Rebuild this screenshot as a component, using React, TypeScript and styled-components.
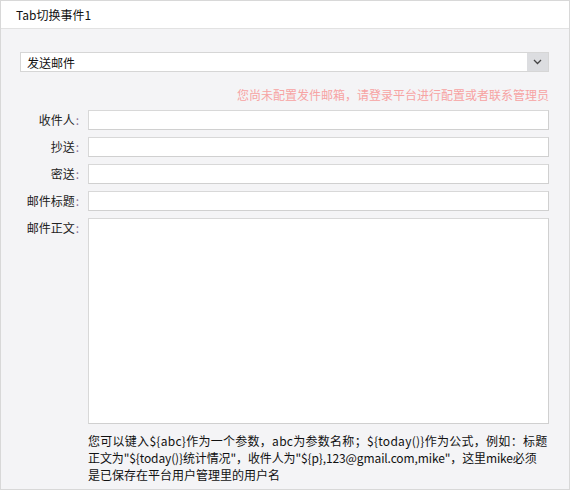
import React from "react";
import styled, { createGlobalStyle } from "styled-components";

const Global = createGlobalStyle`
  html, body { margin: 0; padding: 0; background: #ffffff; }
  body { font-family: "Noto Sans CJK SC", "Noto Sans", sans-serif; font-size: 12px; color: #222; }
  * { box-sizing: border-box; }
`;

const Frame = styled.div`
  width: 570px;
  height: 490px;
  border: 1px solid #d8d8d8;
  background: #f4f4f6;
  display: flex;
  flex-direction: column;
`;

const Header = styled.div`
  height: 28px;
  flex: none;
  background: #ffffff;
  border-bottom: 1px solid #e2e2e2;
  padding-left: 15px;
  display: flex;
  align-items: center;
  font-size: 12px;
  color: #111;
`;

const Body = styled.div`
  padding: 23px 20px 0 19px;
  display: flex;
  flex-direction: column;
`;

const Select = styled.div`
  height: 20px;
  display: flex;
  background: #ffffff;
  border: 1px solid #d6d6d6;
`;

const SelectText = styled.div`
  flex: 1;
  padding-left: 6px;
  display: flex;
  align-items: center;
  font-size: 12px;
  color: #111;
`;

const Arrow = styled.div`
  width: 21px;
  background: #dcdde0;
  display: flex;
  align-items: center;
  justify-content: center;
`;

const Warning = styled.div`
  margin-top: 15px;
  text-align: right;
  color: #f7a3a3;
  font-size: 12px;
  line-height: 16px;
`;

const Form = styled.div`
  margin-top: 7px;
  display: grid;
  grid-template-columns: 68px 1fr;
  row-gap: 7px;
`;

const Label = styled.div`
  padding-right: 9px;
  text-align: right;
  font-size: 12px;
  line-height: 20px;
  color: #222;
`;

const Colon = styled.span`
  color: #8e7596;
  margin-left: 1px;
`;

const Input = styled.div<{ $h?: number }>`
  height: ${(p) => p.$h ?? 20}px;
  background: #ffffff;
  border: 1px solid #d8d8d8;
  border-right-color: #d0d0d0;
  border-bottom-color: #d0d0d0;
`;

const Help = styled.div`
  margin: 8px 0 0 68px;
  font-size: 12px;
  line-height: 17px;
  color: #111;
`;

const Line = styled.div<{ $ls?: number }>`
  white-space: nowrap;
  letter-spacing: ${(p) => p.$ls ?? 0}px;
`;

const fields = ["收件人", "抄送", "密送", "邮件标题"];

export default function App() {
  return (
    <>
      <Global />
      <Frame>
        <Header>Tab切换事件1</Header>
        <Body>
          <Select>
            <SelectText>发送邮件</SelectText>
            <Arrow>
              <svg width="9" height="6" viewBox="0 0 9 6">
                <path d="M1 1 L4.5 4.5 L8 1" fill="none" stroke="#444" strokeWidth="1.3" />
              </svg>
            </Arrow>
          </Select>
          <Warning>您尚未配置发件邮箱，请登录平台进行配置或者联系管理员</Warning>
          <Form>
            {fields.map((f) => (
              <React.Fragment key={f}>
                <Label>
                  {f}
                  <Colon>:</Colon>
                </Label>
                <Input />
              </React.Fragment>
            ))}
            <Label>
              邮件正文<Colon>:</Colon>
            </Label>
            <Input $h={206} />
          </Form>
          <Help>
            <Line $ls={0.28}>您可以键入${"{abc}"}作为一个参数，abc为参数名称；${"{today()}"}作为公式，例如：标题</Line>
            <Line $ls={-0.12}>正文为"${"{today()}"}统计情况"，收件人为"${"{p}"},123@gmail.com,mike"，这里mike必须</Line>
            <Line>是已保存在平台用户管理里的用户名</Line>
          </Help>
        </Body>
      </Frame>
    </>
  );
}
